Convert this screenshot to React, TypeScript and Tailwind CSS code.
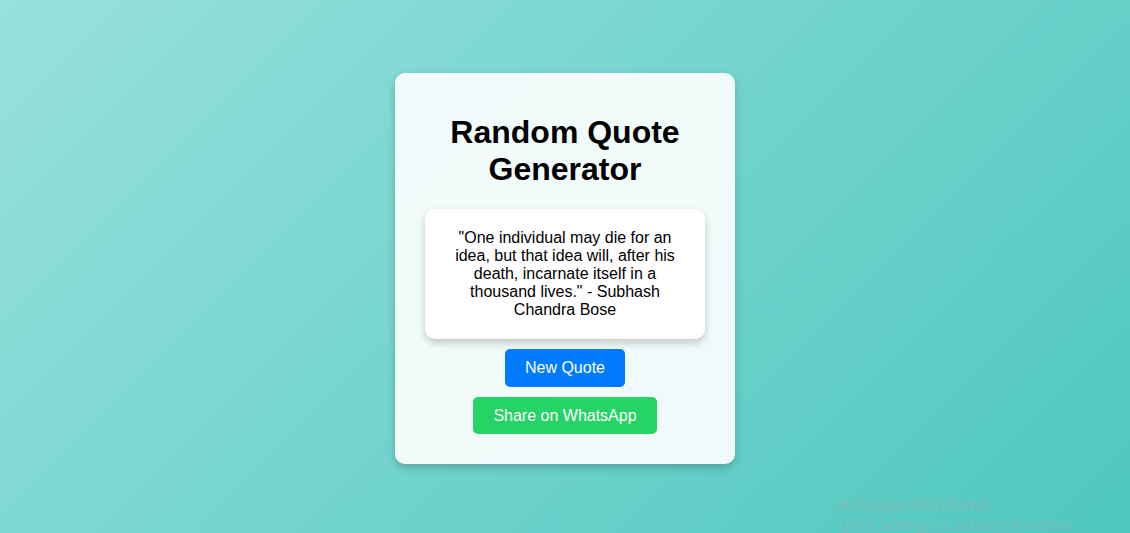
const App = () => {
  return (
    <div className="relative min-h-screen w-full flex items-center justify-center pt-1 bg-[linear-gradient(135deg,#98e0dc_0%,#4dc7bf_100%)] font-['Liberation_Sans',Arial,sans-serif] overflow-hidden">
      <div className="w-[340px] p-5 rounded-[10px] bg-white/90 shadow-[0_4px_8px_rgba(0,0,0,0.2)] text-center">
        <h1 className="my-[21.4px] text-[32px] font-bold text-black leading-[36.8px]">
          Random Quote Generator
        </h1>
        <div className="mx-2.5 px-5 py-5 bg-white rounded-[10px] shadow-[0_4px_8px_rgba(0,0,0,0.2)]">
          <p className="text-base leading-[18px] text-black">
            "One individual may die for an idea, but that idea will, after his death, incarnate itself in a thousand lives." - Subhash Chandra Bose
          </p>
        </div>
        <div className="flex flex-col items-center">
          <button className="mt-2.5 px-5 py-2.5 rounded-[5px] bg-[#007bff] text-white text-base leading-[18px]">
            New Quote
          </button>
          <button className="mt-2.5 mb-2.5 px-5 py-2.5 rounded-[5px] bg-[#25d366] text-white text-base leading-[17px]">
            Share on WhatsApp
          </button>
        </div>
      </div>
      <div className="absolute left-[838px] top-[492px] font-['Open_Sans',sans-serif] text-[#8fb7b4]/70 pointer-events-none">
        <div className="text-[18.5px] leading-[23px]">Activate Windows</div>
        <div className="text-[14.5px] leading-[19px]">Go to Settings to activate Windows.</div>
      </div>
    </div>
  );
};

export default App;
